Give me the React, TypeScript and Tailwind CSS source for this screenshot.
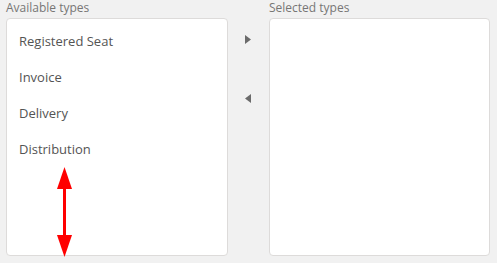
const available = ["Registered Seat", "Invoice", "Delivery", "Distribution"];

export default function App() {
  return (
    <div
      className="relative w-[497px] h-[263px] bg-[#f1f1f1] px-[6px] flex"
      style={{ fontFamily: '"Open Sans", "Noto Sans", sans-serif' }}
    >
      <div className="w-[222px] flex flex-col">
        <div className="text-[12px] leading-[16px] text-[#777675] mb-[2px]">Available types</div>
        <ul className="h-[238px] bg-white border border-[#dddbda] rounded-[4px] py-[5px]">
          {available.map((t) => (
            <li key={t} className="h-[36px] flex items-center px-[12px] text-[13px] text-[#545454]">
              {t}
            </li>
          ))}
        </ul>
      </div>

      <div className="w-[41px] flex flex-col items-center pt-[35px] gap-[50px] pr-[1px]">
        <svg width="6" height="9" viewBox="0 0 6 9">
          <path d="M0 0 L6 4.5 L0 9 Z" fill="#6b6b6b" />
        </svg>
        <svg width="6" height="9" viewBox="0 0 6 9">
          <path d="M6 0 L0 4.5 L6 9 Z" fill="#6b6b6b" />
        </svg>
      </div>

      <div className="w-[221px] flex flex-col">
        <div className="text-[12px] leading-[16px] text-[#777675] mb-[2px]">Selected types</div>
        <div className="h-[238px] bg-white border border-[#dddbda] rounded-[4px]" />
      </div>

      {/* annotation arrow */}
      <svg className="absolute left-[57px] top-[167px]" width="15" height="90" viewBox="0 0 15 90">
        <path d="M7.5 0 L15 22 L0 22 Z" fill="#ff0000" />
        <rect x="6" y="20" width="3" height="50" fill="#ff0000" />
        <path d="M0 68 L15 68 L7.5 90 Z" fill="#ff0000" />
      </svg>
    </div>
  );
}
